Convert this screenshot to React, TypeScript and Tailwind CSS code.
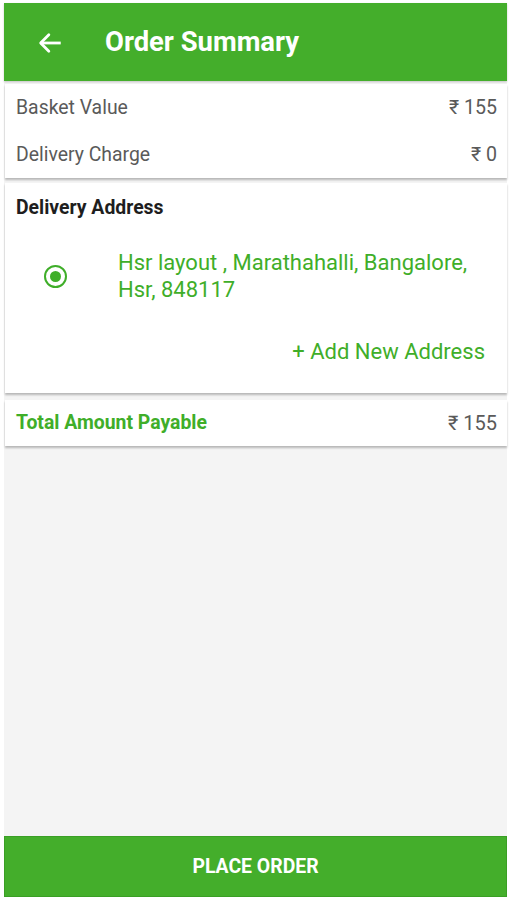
import React from "react";

export default function App() {
  return (
    <div className="w-[510px] h-[900px] bg-white pl-[4px] pr-[3px] pt-[3px] pb-[3px]" style={{ fontFamily: "Roboto, 'Liberation Sans', sans-serif" }}>
      <div className="flex h-full flex-col bg-[#f4f4f4]">
        <div className="flex h-[78px] items-center bg-[#44ae2b] shadow-[0_1px_2px_rgba(0,0,0,0.2)]">
          <svg className="ml-[32px] mt-[2px]" width="28" height="28" viewBox="0 0 24 24" fill="none" stroke="white" strokeWidth="2.4" strokeLinecap="square">
            <path d="M20 12H5" />
            <path d="M11 5l-7 7 7 7" strokeLinecap="round" strokeLinejoin="round" />
          </svg>
          <div className="ml-[41px] mt-[2px] text-[27.4px] font-bold text-white">Order Summary</div>
        </div>

        <div className="mt-[3px] ml-[1px] bg-white shadow-[0_2px_2px_rgba(0,0,0,0.25)] h-[94px] flex flex-col justify-center pl-[11px] pr-[12px] text-[#5a5a5a] text-[19.4px]">
          <div className="flex justify-between h-[24px] items-center mb-[23px]">
            <span>Basket Value</span>
            <span className="text-[19.6px] mr-[-2px]">₹ 155</span>
          </div>
          <div className="flex justify-between h-[24px] items-center">
            <span>Delivery Charge</span>
            <span className="text-[19.6px] mr-[-2px]">₹ 0</span>
          </div>
        </div>

        <div className="mt-[5px] ml-[1px] bg-white shadow-[0_2px_2px_rgba(0,0,0,0.25)] h-[210px] pl-[11px] pr-[12px] pt-[13px] relative">
          <div className="text-[19.4px] font-bold text-[#1e1e1e] leading-[24px]">Delivery Address</div>
          <div className="flex items-center mt-[29px]">
            <div className="ml-[28px] w-[23px] h-[23px] rounded-full border-[2.5px] border-[#3fae29] flex items-center justify-center shrink-0">
              <div className="w-[11px] h-[11px] rounded-full bg-[#3fae29]" />
            </div>
            <div className="ml-[51px] text-[22px] leading-[27px] text-[#3fae29]">
              Hsr layout , Marathahalli, Bangalore,
              <br />
              Hsr, 848117
            </div>
          </div>
          <div className="flex justify-end mt-[32px] pr-[10px] text-[22px] text-[#3fae29]">+ Add New Address</div>
        </div>

        <div className="mt-[7px] ml-[1px] bg-white shadow-[0_2px_2px_rgba(0,0,0,0.25)] h-[46px] pl-[11px] pr-[12px] flex items-center justify-between">
          <span className="text-[19.4px] font-bold text-[#3fae29]">Total Amount Payable</span>
          <span className="text-[20px] text-[#5a5a5a] mr-[-2px]">₹ 155</span>
        </div>

        <div className="flex-1" />

        <div className="h-[61px] bg-[#44ae2b] border border-[#3a9f25] flex items-center justify-center text-white text-[19.4px] font-bold">
          PLACE ORDER
        </div>
      </div>
    </div>
  );
}
